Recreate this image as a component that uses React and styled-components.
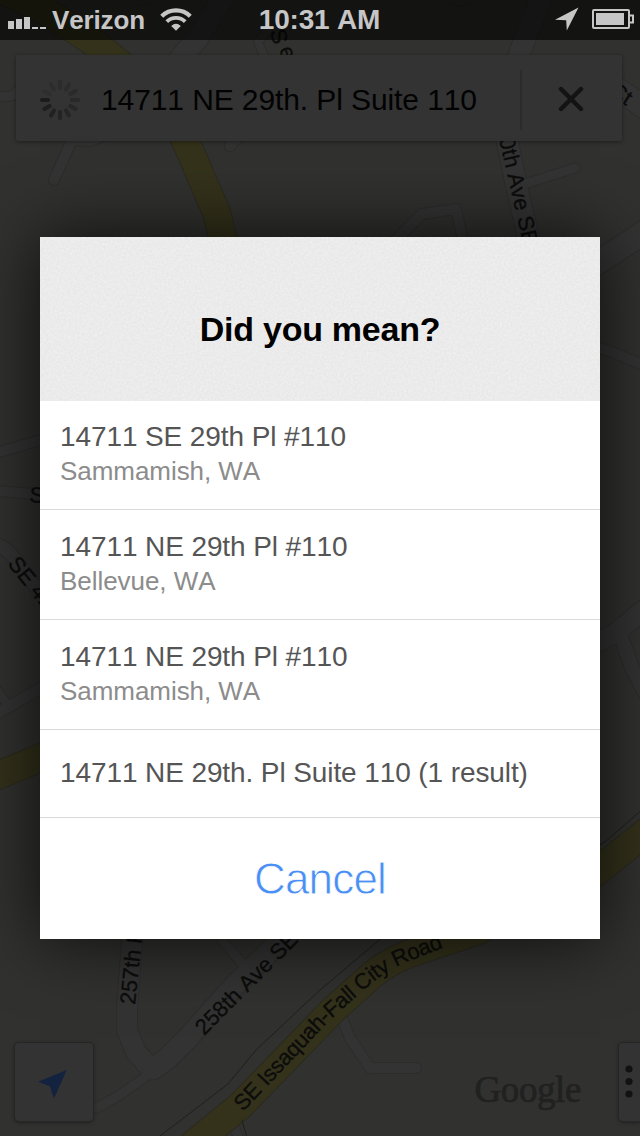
import React from "react";
import styled, { createGlobalStyle } from "styled-components";

const suggestions = [
  { id: 1, address: "14711 SE 29th Pl #110", city: "Sammamish, WA" },
  { id: 2, address: "14711 NE 29th Pl #110", city: "Bellevue, WA" },
  { id: 3, address: "14711 NE 29th Pl #110", city: "Sammamish, WA" },
  { id: 4, address: "14711 NE 29th. Pl Suite 110 (1 result)" },
];

const roads = [
  { d: "M-4 97 L12 96 L22 86", width: 9 },
  { d: "M54 180 L72 140 L90 141 L108 134", width: 10 },
  { d: "M230 146 L242 133", width: 10 },
  { d: "M165 78 L183 55 L198 38 L226 -6", width: 21 },
  { d: "M268 30 L258 42 L266 60", width: 8 },
  { d: "M512 75 L519 55 L526 36 L542 -4", width: 21 },
  { d: "M605 80 L645 108", width: 22 },
  { d: "M505 130 L513 170 L530 245", width: 21 },
  { d: "M525 184 L575 168", width: 9 },
  { d: "M392 244 L422 214 L456 209 L464 245", width: 10 },
  { d: "M590 268 L622 247 L650 228", width: 23 },
  { d: "M590 345 L612 352 L650 368", width: 10 },
  { d: "M-4 453 L44 439", width: 10 },
  { d: "M-4 491 L44 495", width: 10 },
  { d: "M-4 544 Q8 548 20 566 L50 605", width: 13 },
  { d: "M-4 688 L10 708", width: 8 },
  { d: "M-4 714 L50 683", width: 11 },
  { d: "M590 646 L614 634 L650 605", width: 19 },
  { d: "M620 634 L632 668 L650 702", width: 14 },
  { d: "M133 930 L127 1007 L127 1030 L136 1052 L151 1069", width: 20 },
  { d: "M300 922 L235 985 L186 1040 L168 1058 L153 1069", width: 21 },
  { d: "M154 1071 L118 1096 L97 1108", width: 9 },
  { d: "M222 940 L246 968", width: 9 },
  { d: "M338 1008 L350 1038 L370 1068 L416 1068", width: 10 },
  { d: "M232 1120 L240 1142", width: 9 },
];

const highways = [
  "M-6 -14 L40 8 L66 24 L90 40 Q168 98 186 142 L197 167 L217 214 L224 244",
  "M-6 777 L50 754",
  "M590 877 L650 829",
  "M190 1147 L240 1106 L333 1010 L372 975 Q392 959 414 952 L480 930",
];

const paths = [
  "M160 1136 L228 1084 L256 1050 L320 990 L384 936",
  "M242 1120 L247 1138",
  "M600 845 L606 841 L644 808",
];

const spokes = ["#1b1b1b", "#1e1e1e", "#212121", "#232323", "#252525", "#272727", "#292929", "#2a2a2a", "#2b2b2b", "#2c2c2c", "#2d2d2d", "#2e2e2e"];

const App = () => (
  <Screen>
    <GlobalStyle />
    <Map />
    <StatusBar />
    <SearchBar />
    <MapControls />
    <Dialog>
      <DialogHeader>
        <Grain>
          <filter id="grain">
            <feTurbulence type="fractalNoise" baseFrequency="0.45" numOctaves="2" />
            <feColorMatrix values="0 0 0 0 1  0 0 0 0 1  0 0 0 0 1  0.6 0 0 0 -0.17" />
          </filter>
          <rect width="100%" height="100%" filter="url(#grain)" />
        </Grain>
        <DialogTitle>Did you mean?</DialogTitle>
      </DialogHeader>
      <SuggestionList>
        {suggestions.map(({ id, address, city }) => (
          <Suggestion key={id} $single={!city}>
            <Address>{address}</Address>
            {city && <City>{city}</City>}
          </Suggestion>
        ))}
      </SuggestionList>
      <CancelButton>Cancel</CancelButton>
    </Dialog>
  </Screen>
);

export default App;

const Map = () => (
  <MapCanvas viewBox="0 0 640 1136">
    <g fill="none" strokeLinejoin="round" strokeLinecap="round">
      {roads.map(({ d, width }) => (
        <path key={d} d={d} stroke="#2c2c2b" strokeWidth={width + 2} />
      ))}
      {roads.map(({ d, width }) => (
        <path key={d} d={d} stroke="#333334" strokeWidth={width} />
      ))}
      {highways.map((d) => (
        <path key={d} d={d} stroke="#2b2a20" strokeWidth="29" />
      ))}
      {highways.map((d) => (
        <path key={d} d={d} stroke="#34321b" strokeWidth="27" />
      ))}
      {paths.map((d) => (
        <path key={d} d={d} stroke="#1d1d1c" strokeWidth="1" strokeDasharray="3 1" />
      ))}
      <path d="M450 3 Q460 10 470 3 M130 2 Q141 10 155 2" stroke="#2b2b2a" />
    </g>
    <defs>
      <path id="issaquah" d="M243 1112 L330 1020 L366 988 Q384 972 404 963 L460 941" />
    </defs>
    <MapLabel transform="translate(270 31) rotate(76)">S</MapLabel>
    <MapLabel transform="translate(279 49) rotate(72)">e</MapLabel>
    <MapLabel transform="translate(499 139) rotate(77)">0th Ave SE</MapLabel>
    <MapLabel transform="translate(608 94) rotate(33)">Ct</MapLabel>
    <MapLabel transform="translate(29 502) rotate(4)">S</MapLabel>
    <MapLabel transform="translate(7 564) rotate(51)">SE 41st</MapLabel>
    <MapLabel transform="translate(135 1005) rotate(-84)">257th Pl</MapLabel>
    <MapLabel transform="translate(204 1036) rotate(-45)">258th Ave SE</MapLabel>
    <MapLabel>
      <textPath href="#issaquah" textLength="263">SE Issaquah-Fall City Road</textPath>
    </MapLabel>
  </MapCanvas>
);

const StatusBar = () => (
  <StyledStatusBar>
    <Carrier>
      <svg width="38" height="12" fill="#c6c6c6">
        <path d="M0 4h6v8H0zM8 2h6v10H8zM16 0h6v12h-6zM24 10h6v2h-6zM32 10h6v2h-6z" />
      </svg>
      <CarrierName>Verizon</CarrierName>
      <svg width="32" height="23" viewBox="0 0 32 23" fill="none" stroke="#c6c6c6">
        <path d="M1.7 8.2 A20.5 20.5 0 0 1 30.3 8.2" strokeWidth="4.2" />
        <path d="M6.8 13.7 A13 13 0 0 1 25.2 13.7" strokeWidth="3.8" />
        <path d="M11.2 17.9 Q16 13.6 20.8 17.9 L16 22.8Z" fill="#c6c6c6" stroke="none" />
      </svg>
    </Carrier>
    <Clock>10:31 AM</Clock>
    <StatusIcons>
      <svg width="24" height="24" fill="#c6c6c6">
        <path d="M0 12.8 L23.5 0.5 L11.8 23.5 L11.2 13.3Z" />
      </svg>
      <svg width="42" height="20" fill="none">
        <rect x="1" y="1" width="36" height="18" rx="1" stroke="#c6c6c6" strokeWidth="2" />
        <path d="M4 4h28v12H4z" fill="#c6c6c6" />
        <path d="M38 6.5h3v7h-3" stroke="#c6c6c6" strokeWidth="2" />
      </svg>
    </StatusIcons>
  </StyledStatusBar>
);

const SearchBar = () => (
  <StyledSearchBar>
    <Spinner viewBox="-20 -20 40 40">
      {spokes.map((color, i) => (
        <path key={color} d="M-18 0H-12" stroke={color} transform={`rotate(${-30 * i})`} />
      ))}
    </Spinner>
    <Query>14711 NE 29th. Pl Suite 110</Query>
    <ClearButton>
      <svg width="26" height="26" stroke="#131313" strokeWidth="4.4" strokeLinecap="round">
        <path d="M3 3L23 23M23 3L3 23" />
      </svg>
    </ClearButton>
  </StyledSearchBar>
);

const MapControls = () => (
  <StyledMapControls>
    <LocateButton>
      <svg width="29" height="29" fill="#13233f">
        <path d="M0 11.7 L28.7 0 L16 28.6 L11.8 16.2Z" />
      </svg>
    </LocateButton>
    <Attribution>Google</Attribution>
    <MenuButton>
      <svg width="8" height="34" fill="#121212">
        <circle cx="4" cy="4" r="3.6" />
        <circle cx="4" cy="16.5" r="3.6" />
        <circle cx="4" cy="29" r="3.6" />
      </svg>
    </MenuButton>
  </StyledMapControls>
);

const GlobalStyle = createGlobalStyle`
  body {
    margin: 0;
    background: #31312f;
    font-family: "Liberation Sans", Arial, sans-serif;
    font-kerning: none;
  }
`;

const Screen = styled.div`
  position: relative;
  display: flex;
  flex-direction: column;
  width: 640px;
  height: 1136px;
  overflow: hidden;
`;

const MapCanvas = styled.svg`
  position: absolute;
  inset: 0;
  width: 640px;
  height: 1136px;
  background: #31312f;
`;

const MapLabel = styled.text`
  fill: #0c0c0b;
  stroke: #0c0c0b;
  stroke-width: 0.3px;
  font-size: 22px;
`;

const StyledStatusBar = styled.header`
  position: relative;
  display: grid;
  grid-template-columns: 1fr auto 1fr;
  align-items: center;
  box-sizing: border-box;
  height: 40px;
  padding: 0 6px 0 8px;
  background: rgba(0, 0, 0, 0.6);
  color: #c6c6c6;
  font-weight: 700;
`;

const Carrier = styled.div`
  display: flex;
  align-items: center;

  svg:first-child {
    margin: 6px 6px 0 0;
  }

  svg:last-child {
    margin-bottom: 1px;
  }
`;

const CarrierName = styled.span`
  margin-right: 15px;
  font-size: 26px;
  letter-spacing: -0.15px;
  line-height: 40px;
`;

const Clock = styled.span`
  margin-right: 3px;
  font-size: 28px;
  letter-spacing: -0.2px;
  line-height: 38px;
`;

const StatusIcons = styled.div`
  display: flex;
  align-items: center;
  justify-content: flex-end;
  gap: 13px;
  margin-top: -2px;
`;

const StyledSearchBar = styled.div`
  position: relative;
  display: flex;
  align-items: center;
  height: 86px;
  margin: 15px 18px 0 16px;
  border-radius: 2px;
  background: #333333;
  box-shadow: 0 1px 4px rgba(0, 0, 0, 0.4);
`;

const Spinner = styled.svg`
  width: 40px;
  height: 40px;
  margin: 4px 21px 0 24px;
  stroke-width: 4;
  stroke-linecap: round;
`;

const Query = styled.span`
  flex: 1;
  padding-top: 4px;
  color: #020202;
  font-size: 30px;
  letter-spacing: -0.1px;
  white-space: nowrap;
`;

const ClearButton = styled.div`
  display: flex;
  align-items: center;
  justify-content: center;
  width: 100px;
  height: 60px;
  margin-top: 4px;
  border-left: 2px solid #2b2b2b;

  svg {
    margin: 0 2px 2px 0;
  }
`;

const StyledMapControls = styled.div`
  position: relative;
  display: flex;
  align-items: center;
  justify-content: space-between;
  margin: auto 0 15px 15px;
`;

const ControlButton = styled.div`
  display: flex;
  align-items: center;
  height: 78px;
  background: #333334;
  box-shadow: 0 0 0 1px #262626, 0 1px 4px rgba(0, 0, 0, 0.5);
`;

const LocateButton = styled(ControlButton)`
  justify-content: center;
  width: 78px;
  border-radius: 4px;

  svg {
    margin: 5px 3px 0 0;
  }
`;

const Attribution = styled.span`
  margin: 14px 38px 0 auto;
  color: #212121;
  font-family: "Liberation Serif", "Times New Roman", serif;
  font-size: 37px;
  letter-spacing: -0.4px;
  -webkit-text-stroke: 0.7px #212121;
`;

const MenuButton = styled(ControlButton)`
  width: 21px;
  border-radius: 4px 0 0 4px;

  svg {
    margin-left: 6px;
  }
`;

const Dialog = styled.section`
  position: absolute;
  top: 237px;
  left: 40px;
  display: flex;
  flex-direction: column;
  width: 560px;
  height: 702px;
  background: #ffffff;
  box-shadow: 0 0 66px rgba(0, 0, 0, 0.75);
`;

const DialogHeader = styled.div`
  position: relative;
  display: flex;
  flex-shrink: 0;
  align-items: center;
  justify-content: center;
  box-sizing: border-box;
  height: 164px;
  padding-top: 21px;
  background: #e8e8e8;
`;

const Grain = styled.svg`
  position: absolute;
  inset: 0;
  width: 100%;
  height: 100%;
`;

const DialogTitle = styled.h1`
  position: relative;
  margin: 0;
  color: #000000;
  font-size: 34px;
  letter-spacing: -0.25px;
`;

const SuggestionList = styled.ul`
  margin: 0;
  padding: 0;
  list-style: none;
`;

const Suggestion = styled.li`
  display: flex;
  flex-direction: column;
  justify-content: center;
  box-sizing: border-box;
  height: ${({ $single }) => ($single ? "88px" : "110px")};
  padding: 0 20px 2px;
  border-bottom: 1px solid #d9d9d9;

  &:first-child {
    height: 109px;
  }
`;

const Address = styled.span`
  color: #555555;
  font-size: 28px;
  letter-spacing: -0.1px;
  line-height: 36px;
  white-space: nowrap;
`;

const City = styled.span`
  margin-bottom: 2px;
  color: #8c8c8c;
  font-size: 26px;
  letter-spacing: -0.05px;
  line-height: 32px;
`;

const CancelButton = styled.div`
  flex: 1;
  color: #4a8ff5;
  font-size: 44px;
  letter-spacing: -0.8px;
  line-height: 121px;
  text-align: center;
  -webkit-text-stroke: 0.8px #ffffff;
`;
